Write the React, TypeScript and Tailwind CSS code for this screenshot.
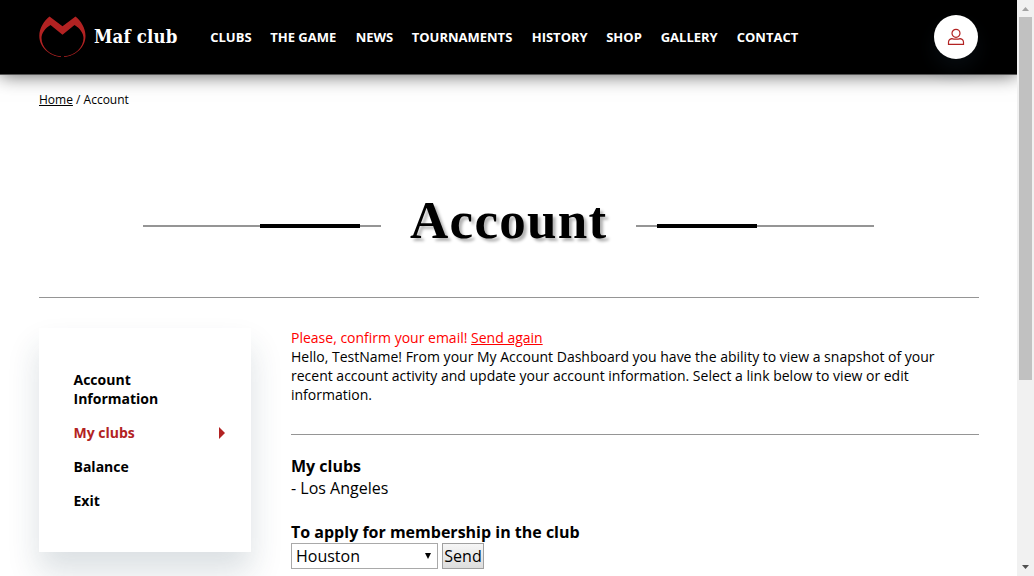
import React from 'react';

const navItems = [
  { label: 'CLUBS', box: 'w-[60px]' },
  { label: 'THE GAME', box: 'w-[85.5px]' },
  { label: 'NEWS', box: 'w-[56px]' },
  { label: 'TOURNAMENTS', box: 'w-[120px]' },
  { label: 'HISTORY', box: 'w-[74.5px]' },
  { label: 'SHOP', box: 'w-[54.5px]' },
  { label: 'GALLERY', box: 'w-[76px]' },
  { label: 'CONTACT', box: 'w-[70px]' },
];

function Header() {
  return (
    <header className="relative flex h-[75px] shrink-0 items-center border-b border-[#555] bg-black pr-[39px] pl-[39px] text-white shadow-[0_0_18px_rgba(0,0,0,0.65)]">
      <svg className="h-[42px] w-[47px] shrink-0" viewBox="0 0 47 42" fill="#b22222">
        <path
          fillRule="evenodd"
          d="M10.5 .5 L23.5 10.3 L36.5 .5 C42 5 46.5 12 46.5 20 C46.5 31 37 40 25 41 L25 40.3 C36 39.5 44.5 31.5 44.5 22 C44.5 17 40.5 12 35.5 9 L23.5 18.8 L11.5 9 C6.5 12 2.5 17 2.5 22 C2.5 31.5 11 39.5 22 40.3 L22 41 C10 40 .3 31 .3 20 C.3 12 5 5 10.5 .5 Z"
        />
      </svg>
      <span className="ml-2 w-[116px] font-['DejaVu_Serif_Condensed','DejaVu_Serif',serif] text-[18.5px] leading-6 font-bold tracking-[0.15px] whitespace-nowrap">
        Maf club
      </span>
      <nav className="flex flex-1 pl-[0.2px] text-[13px] leading-5 font-bold">
        {navItems.map((item) => (
          <a key={item.label} className={`${item.box} shrink-0 whitespace-nowrap`}>
            {item.label}
          </a>
        ))}
      </nav>
      <a className="flex size-11 items-center justify-center rounded-full bg-white shadow-[0_10px_20px_rgba(34,60,80,0.2)]">
        <svg className="size-[18px]" viewBox="0 0 18 18" fill="none" stroke="#b22222" strokeWidth="1.2">
          <circle cx="9" cy="5.3" r="4" />
          <path d="M1.5 16.3 v-2 q0-3 3.3-3.7 q4.2 1.2 8.4 0 q3.3.7 3.3 3.7 v2 Z" />
        </svg>
      </a>
    </header>
  );
}

function PageTitle() {
  return (
    <div className="flex h-[190px] items-start border-b border-[#959595] pt-[86px] pl-[104px]">
      <div className="mt-[30px] flex h-1 w-[238px] items-center">
        <span className="h-0.5 w-[117px] bg-[#959595]" />
        <span className="h-1 w-[100px] bg-black" />
        <span className="h-0.5 w-[21px] bg-[#959595]" />
      </div>
      <h1 className="w-[255px] pl-[29px] font-['Liberation_Serif',serif] text-[53px] leading-[53px] font-bold tracking-[1.3px] whitespace-nowrap [text-shadow:3px_3px_3px_rgba(0,0,0,0.3)]">
        Account
      </h1>
      <div className="mt-[30px] flex h-1 w-[238px] items-center">
        <span className="h-0.5 w-[21px] bg-[#959595]" />
        <span className="h-1 w-[100px] bg-black" />
        <span className="h-0.5 w-[117px] bg-[#959595]" />
      </div>
    </div>
  );
}

function Sidebar() {
  return (
    <aside className="flex h-[224px] w-[212px] shrink-0 flex-col gap-[15px] bg-white pt-[42px] pr-[26px] pl-[34.5px] text-sm leading-[19px] font-bold shadow-[0_20px_30px_rgba(34,60,80,0.16)]">
      <a className="w-[100px]">Account Information</a>
      <a className="flex items-center justify-between text-[#b22222]">
        My clubs
        <svg className="h-3 w-1.5" viewBox="0 0 6 12" fill="#b22222">
          <path d="M0 0 L6 6 L0 12 Z" />
        </svg>
      </a>
      <a>Balance</a>
      <a>Exit</a>
    </aside>
  );
}

function AccountContent() {
  return (
    <section className="w-[688px]">
      <div className="h-[107px] border-b border-[#959595] text-sm leading-[19px]">
        <p className="text-[#f00]">
          Please, confirm your email! <a className="underline">Send again</a>
        </p>
        <p className="w-[660px]">
          Hello, TestName! From your My Account Dashboard you have the ability to view a snapshot of your
          recent account activity and update your account information. Select a link below to view or edit
          information.
        </p>
      </div>
      <div className="pt-5 text-base leading-[22px]">
        <h2 className="font-bold">My clubs</h2>
        <p>- Los Angeles</p>
        <h2 className="mt-[22px] font-bold">To apply for membership in the club</h2>
        <div className="flex gap-1">
          <div className="flex h-[26px] w-[147px] items-center justify-between border border-[#a9a9a9] pr-[6px] pl-1">
            Houston
            <svg className="h-[6px] w-[6px]" viewBox="0 0 6 6" fill="#000">
              <path d="M0 0 H6 L3 6 Z" />
            </svg>
          </div>
          <button className="flex h-[26px] w-[42px] items-center justify-center border border-[#a0a0a0] bg-gradient-to-b from-[#f6f6f6] to-[#dddddd]">
            Send
          </button>
        </div>
      </div>
    </section>
  );
}

function Scrollbar() {
  return (
    <div className="flex w-[17px] shrink-0 flex-col items-center bg-[#f1f1f1]">
      <svg className="h-[17px] w-[17px] shrink-0" viewBox="0 0 17 17" fill="#a3a3a3">
        <path d="M5 11 L8.5 7 L12 11 Z" />
      </svg>
      <div className="h-[363px] w-[13px] bg-[#c1c1c1]" />
      <svg className="mt-auto h-[17px] w-[17px] shrink-0" viewBox="0 0 17 17" fill="#505050">
        <path d="M5 6 L12 6 L8.5 10 Z" />
      </svg>
    </div>
  );
}

export default function App() {
  return (
    <div className="flex h-[576px] w-[1034px] overflow-hidden bg-white font-['Open_Sans',sans-serif] text-black">
      <div className="flex h-[576px] w-[1017px] flex-col overflow-hidden">
        <Header />
        <main className="px-[38px] pl-[39px]">
          <p className="h-[33px] pt-4 text-xs leading-[17px]">
            <a className="underline">Home</a> / Account
          </p>
          <PageTitle />
          <div className="flex gap-10 pt-[30px]">
            <Sidebar />
            <AccountContent />
          </div>
        </main>
      </div>
      <Scrollbar />
    </div>
  );
}
